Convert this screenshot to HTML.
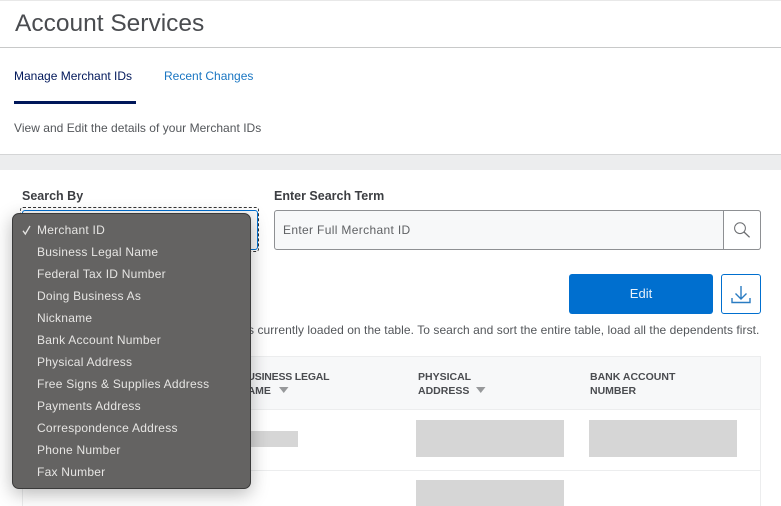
<!DOCTYPE html>
<html><head><meta charset="utf-8"><style>
html,body{margin:0;padding:0}
body{width:781px;height:506px;position:relative;overflow:hidden;background:#fff;font-family:"Liberation Sans",sans-serif;color:#53565a}
.a{position:absolute;white-space:nowrap}
.m{left:37px;font-size:12px;letter-spacing:.24px;color:#e6e5e3;line-height:22px;height:22px}
.th{font-size:10.5px;font-weight:bold;color:#4a4c50;line-height:14px;white-space:nowrap;position:absolute}
.g{position:absolute;background:#d6d6d6}
</style></head><body>
<div class="a" style="left:0;top:0;width:781px;height:1px;background:#e8e8e8"></div>
<div class="a" style="left:15px;top:8px;font-size:24.5px;line-height:32px;color:#4a4c50">Account Services</div>
<div class="a" style="left:0;top:47px;width:781px;height:1px;background:#c8c9c9"></div>
<div class="a" style="left:14px;top:68px;font-size:12px;line-height:16px;color:#00175a">Manage Merchant IDs</div>
<div class="a" style="left:164px;top:68px;font-size:12px;line-height:16px;color:#1a76c2">Recent Changes</div>
<div class="a" style="left:14px;top:101px;width:122px;height:3px;background:#00175a"></div>
<div class="a" style="left:14px;top:120px;font-size:12px;line-height:16px;letter-spacing:.03px;color:#53565a">View and Edit the details of your Merchant IDs</div>
<div class="a" style="left:0;top:154px;width:781px;height:16px;background:#ecedee;border-top:1px solid #d4d5d6;box-sizing:border-box"></div>

<div class="a" style="left:22px;top:188px;font-size:12.5px;font-weight:bold;line-height:16px;color:#3c3e42">Search By</div>
<div class="a" style="left:274px;top:188px;font-size:12.5px;font-weight:bold;line-height:16px;color:#3c3e42">Enter Search Term</div>
<div class="a" style="left:20px;top:207px;width:239px;height:45px;border:1px dashed #333;box-sizing:border-box;border-radius:3px"></div>
<div class="a" style="left:22px;top:210px;width:236px;height:40px;border:1px solid #006fcf;box-sizing:border-box;border-radius:3px;background:#f7f8f9"></div>

<div class="a" style="left:274px;top:210px;width:487px;height:40px;border:1px solid #8e9093;box-sizing:border-box;border-radius:3px;background:#f7f8f9"></div>
<div class="a" style="left:723px;top:210px;width:38px;height:40px;border:1px solid #8e9093;box-sizing:border-box;border-radius:0 3px 3px 0;background:#fff"></div>
<div class="a" style="left:283px;top:222px;font-size:12px;line-height:16px;letter-spacing:.34px;color:#5f6164">Enter Full Merchant ID</div>
<svg class="a" style="left:733px;top:221px" width="18" height="18" viewBox="0 0 18 18" fill="none" stroke="#6a6c6f" stroke-width="1"><circle cx="7" cy="7.2" r="5.4"/><path d="M11 11l5.6 5.3" stroke-width="1.300"/></svg>

<div class="a" style="left:569px;top:274px;width:144px;height:40px;background:#006fcf;border-radius:3px;color:#e8f2fb;font-size:13px;line-height:39px;text-align:center">Edit</div>
<div class="a" style="left:721px;top:274px;width:40px;height:40px;border:1px solid #006fcf;box-sizing:border-box;border-radius:3px;background:#fff"></div>
<svg class="a" style="left:731px;top:285px" width="20" height="19" viewBox="0 0 20 19" fill="none" stroke="#2a7cc2" stroke-width="1.400"><path d="M10 1v13M4.500 8.500L10 14l5.500-5.500"/><path d="M1 13v4.500h18V13"/></svg>

<div class="a" style="left:248px;top:322px;font-size:12px;line-height:16px;letter-spacing:.06px;color:#53565a">s currently loaded on the table. To search and sort the entire table, load all the dependents first.</div>

<div class="a" style="left:22px;top:356px;width:739px;height:150px;border:1px solid #ecedee;border-bottom:0;box-sizing:border-box"></div>
<div class="a" style="left:23px;top:357px;width:737px;height:52px;background:#f7f8f9;border-bottom:1px solid #ecedee"></div>
<div class="th" style="left:240px;top:370px"><span style="letter-spacing:-.2px">BUSINESS LEGAL</span><br>NAME</div>
<svg class="a" style="left:279px;top:387px" width="10" height="6"><path d="M0 0h9.500L4.750 6z" fill="#97999b"/></svg>
<div class="th" style="left:418px;top:370px">PHYSICAL<br>ADDRESS</div>
<svg class="a" style="left:476px;top:387px" width="10" height="6"><path d="M0 0h9.500L4.750 6z" fill="#97999b"/></svg>
<div class="th" style="left:590px;top:370px">BANK ACCOUNT<br>NUMBER</div>
<div class="a" style="left:23px;top:470px;width:737px;height:1px;background:#ecedee"></div>
<div class="g" style="left:240px;top:431px;width:58px;height:16px"></div>
<div class="g" style="left:416px;top:420px;width:148px;height:37px"></div>
<div class="g" style="left:589px;top:420px;width:148px;height:37px"></div>
<div class="g" style="left:416px;top:480px;width:148px;height:26px"></div>

<div class="a" style="left:12px;top:213px;width:239px;height:276px;background:#646362;border:1px solid #3a3a3a;box-sizing:border-box;border-radius:7px;box-shadow:0 5px 18px rgba(0,0,0,.28)"></div>
<svg class="a" style="left:21px;top:224px" width="12" height="12" viewBox="0 0 12 12" fill="none" stroke="#e6e5e3" stroke-width="1.300"><path d="M2 6.800L4.300 10 9 2"/></svg>
<div class="a m" style="top:219px">Merchant ID</div>
<div class="a m" style="top:241px">Business Legal Name</div>
<div class="a m" style="top:263px">Federal Tax ID Number</div>
<div class="a m" style="top:285px">Doing Business As</div>
<div class="a m" style="top:307px">Nickname</div>
<div class="a m" style="top:329px">Bank Account Number</div>
<div class="a m" style="top:351px">Physical Address</div>
<div class="a m" style="top:373px">Free Signs &amp; Supplies Address</div>
<div class="a m" style="top:395px">Payments Address</div>
<div class="a m" style="top:417px">Correspondence Address</div>
<div class="a m" style="top:439px">Phone Number</div>
<div class="a m" style="top:461px">Fax Number</div>
</body></html>
